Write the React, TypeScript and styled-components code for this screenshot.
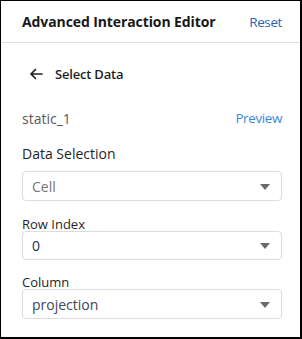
import React, { FC } from "react";
import styled, { createGlobalStyle } from "styled-components";

const GlobalStyle = createGlobalStyle`
    html, body {
        margin: 0;
        padding: 0;
        background: #ffffff;
    }
    body {
        font-family: "Open Sans", "Noto Sans", sans-serif;
    }
`;

const Panel = styled.div`
    box-sizing: border-box;
    width: 302px;
    height: 339px;
    background: #fff;
    border-style: solid;
    border-color: #000;
    border-width: 1px 2px 2px 1px;
    display: flex;
    flex-direction: column;
`;

const Header = styled.div`
    display: flex;
    align-items: center;
    justify-content: space-between;
    height: 41px;
    padding: 0 18px 0 21px;
    border-bottom: 1px solid #dddddd;
`;

const Title = styled.span`
    font-size: 14px;
    font-weight: 700;
    color: #181818;
    letter-spacing: -0.1px;
`;

const LinkButton = styled.span<{ $tone?: "dark" | "light" }>`
    font-size: 13.5px;
    letter-spacing: -0.4px;
    color: ${({ $tone }) => ($tone === "light" ? "#3b87dc" : "#2b64b4")};
    cursor: pointer;
`;

const Body = styled.div`
    display: flex;
    flex-direction: column;
    padding: 0 18px 0 21px;
`;

const BackRow = styled.div`
    display: flex;
    align-items: center;
    gap: 12px;
    height: 24px;
    margin-top: 19px;
    padding-left: 7px;
    font-size: 13px;
    font-weight: 600;
    letter-spacing: -0.2px;
    color: #1f1f1f;
`;

const SourceRow = styled.div`
    display: flex;
    align-items: center;
    justify-content: space-between;
    height: 22px;
    margin-top: 21px;
`;

const SourceName = styled.span`
    font-size: 14px;
    color: #5a5a5a;
`;

const Label = styled.div<{ $size?: number; $line?: number }>`
    font-size: ${({ $size }) => $size || 14}px;
    line-height: ${({ $line }) => $line || 20}px;
    color: #1f1f1f;
`;

const Field = styled.div<{ $top: number }>`
    display: flex;
    flex-direction: column;
    margin-top: ${({ $top }) => $top}px;
`;

const Select = styled.div<{ $height: number; $gap: number }>`
    box-sizing: border-box;
    display: flex;
    align-items: center;
    justify-content: space-between;
    height: ${({ $height }) => $height}px;
    margin-top: ${({ $gap }) => $gap}px;
    padding: 0 11px 0 9px;
    border: 1px solid #dcdcdc;
    border-radius: 4px;
    background: #fff;
`;

const Value = styled.span<{ $color: string }>`
    font-size: 14px;
    color: ${({ $color }) => $color};
`;

const Caret = styled.span`
    width: 0;
    height: 0;
    margin-top: 1px;
    border-left: 5px solid transparent;
    border-right: 5px solid transparent;
    border-top: 6px solid #6b6b6b;
`;

const BackArrow: FC = () => (
    <svg width="14" height="12" viewBox="0 0 14 12">
        <path
            d="M13 6H2M6.5 1.5L2 6l4.5 4.5"
            fill="none"
            stroke="#1f1f1f"
            strokeWidth="1.7"
            strokeLinecap="round"
            strokeLinejoin="round"
        />
    </svg>
);

interface DropdownProps {
    label: string;
    small?: boolean;
    value: string;
    valueColor: string;
    top: number;
    gap: number;
    height: number;
}

const Dropdown: FC<DropdownProps> = ({ label, small, value, valueColor, top, gap, height }) => (
    <Field $top={top}>
        <Label $size={small ? 13 : 14} $line={small ? 14 : 20}>
            {label}
        </Label>
        <Select $height={height} $gap={gap}>
            <Value $color={valueColor}>{value}</Value>
            <Caret />
        </Select>
    </Field>
);

const App: FC = () => (
    <React.Fragment>
        <GlobalStyle />
        <Panel>
            <Header>
                <Title>Advanced Interaction Editor</Title>
                <LinkButton>Reset</LinkButton>
            </Header>
            <Body>
                <BackRow>
                    <BackArrow />
                    <span>Select Data</span>
                </BackRow>
                <SourceRow>
                    <SourceName>static_1</SourceName>
                    <LinkButton $tone="light">Preview</LinkButton>
                </SourceRow>
                <Dropdown label="Data Selection" value="Cell" valueColor="#777777" top={15} gap={7} height={30} />
                <Dropdown label="Row Index" small value="0" valueColor="#1d2c4c" top={16} gap={0} height={29} />
                <Dropdown label="Column" small value="projection" valueColor="#3c4660" top={15} gap={0} height={30} />
            </Body>
        </Panel>
    </React.Fragment>
);

export default App;
